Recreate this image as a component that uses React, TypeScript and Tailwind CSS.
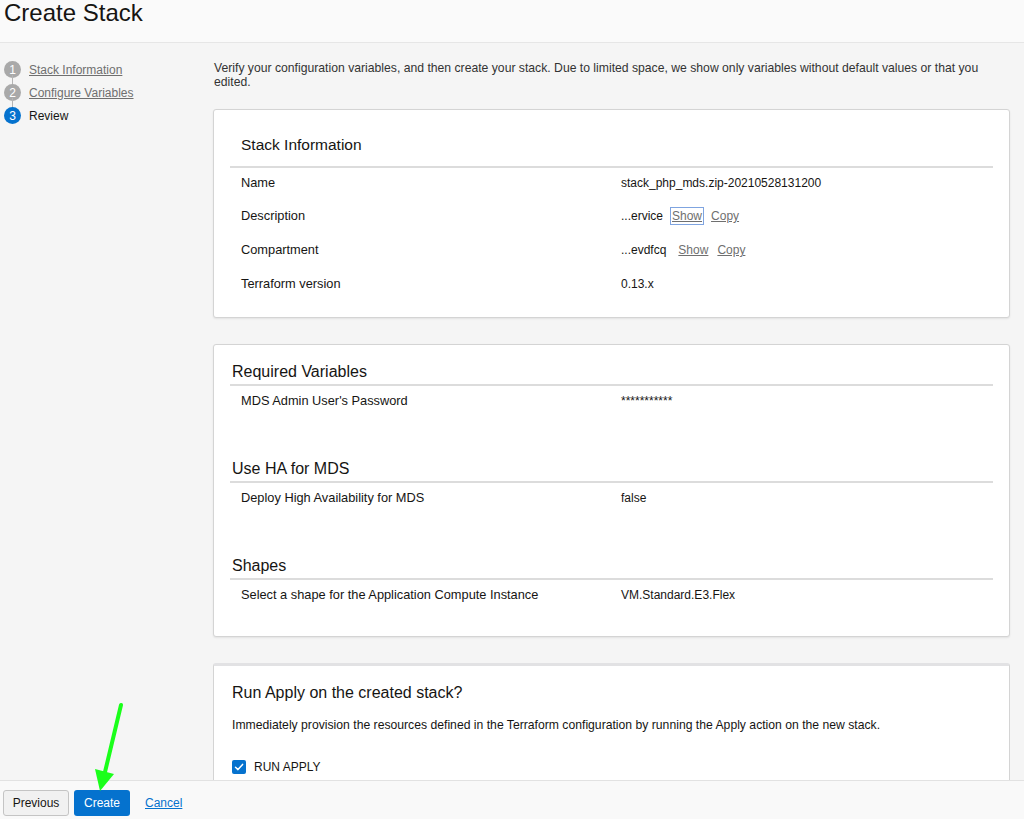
import React from 'react';

type Row = { label: string; value: string; links?: boolean; focused?: boolean };

const stackRows: Row[] = [
  { label: 'Name', value: 'stack_php_mds.zip-20210528131200' },
  { label: 'Description', value: '...ervice', links: true, focused: true },
  { label: 'Compartment', value: '...evdfcq', links: true },
  { label: 'Terraform version', value: '0.13.x' },
];

const sections: { title: string; rows: Row[] }[] = [
  { title: 'Required Variables', rows: [{ label: "MDS Admin User's Password", value: '***********' }] },
  { title: 'Use HA for MDS', rows: [{ label: 'Deploy High Availability for MDS', value: 'false' }] },
  { title: 'Shapes', rows: [{ label: 'Select a shape for the Application Compute Instance', value: 'VM.Standard.E3.Flex' }] },
];

const steps = [
  { n: 1, label: 'Stack Information', done: true },
  { n: 2, label: 'Configure Variables', done: true },
  { n: 3, label: 'Review', done: false },
];

const DataRow: React.FC<{ row: Row }> = ({ row }) => (
  <div className={`flex items-center pl-[11px] text-[12px] leading-[14px] ${row.links ? 'h-[34px]' : 'h-[33px]'}`}>
    <div className="w-[380px] text-[12.8px] text-[#161513]">{row.label}</div>
    <div className="flex items-center text-[#161513]">
      <span>{row.value}</span>
      {row.links && (
        <>
          <span
            className={`underline text-[#6f6f6f] ${
              row.focused ? 'ml-[7px] border border-[#7fa4e0] px-[1px] py-[1px]' : 'ml-[10px] px-[2px] py-[2px]'
            }`}
          >
            Show
          </span>
          <span className="ml-[7px] underline text-[#6f6f6f]">Copy</span>
        </>
      )}
    </div>
  </div>
);

export default function App() {
  return (
    <div className="relative h-[819px] w-[1024px] flex flex-col overflow-hidden bg-[#f5f5f5] font-['Liberation_Sans',Arial,sans-serif] text-[#161513]">
      {/* Header */}
      <div className="h-[43px] shrink-0 bg-[#fafafa] border-b border-[#e6e6e6] px-[4px]">
        <h1 className="text-[24px] leading-[25px] text-[#161513]">Create Stack</h1>
      </div>

      {/* Body */}
      <div className="flex flex-1 min-h-0 overflow-hidden">
        {/* Steps */}
        <div className="w-[213px] shrink-0 pt-[15px] pl-[4px]">
          {steps.map((s, i) => (
            <div key={s.n} className="relative flex items-center h-[23px]">
              {i > 0 && <div className="absolute left-[8px] top-[-6px] h-[12px] w-[1px] bg-[#b5b5b5]" />}
              <div
                className={`relative w-[17px] h-[17px] rounded-full flex items-center justify-center text-[12px] text-white ${
                  s.done ? 'bg-[#a9a9a9]' : 'bg-[#0572ce]'
                }`}
              >
                {s.n}
              </div>
              <span className={`ml-[8px] text-[12px] ${s.done ? 'underline text-[#6f6f6f]' : 'text-[#161513]'}`}>
                {s.label}
              </span>
            </div>
          ))}
        </div>

        {/* Main */}
        <div className="flex-1 pr-[14px] pt-[18px]">
          <p className="pl-[1px] text-[12.2px] leading-[14px] text-[#333] pr-[20px]">
            Verify your configuration variables, and then create your stack. Due to limited space, we show only
            variables without default values or that you edited.
          </p>

          {/* Stack Information */}
          <div className="mt-[20px] bg-white border border-[#d4d4d4] rounded-[3px] shadow-[0_1px_2px_rgba(0,0,0,0.08)] px-[16px] pt-[17px] pb-[17px]">
            <h2 className="pl-[11px] pt-[9px] text-[15.5px] leading-[18px] text-[#161513]">Stack Information</h2>
            <div className="mt-[12px] mb-[-2px] h-[2px] bg-[#dcdcdc]" />
            {stackRows.map((r) => (
              <DataRow key={r.label} row={r} />
            ))}
          </div>

          {/* Variables */}
          <div className="mt-[26px] bg-white border border-[#d4d4d4] rounded-[3px] shadow-[0_1px_2px_rgba(0,0,0,0.08)] px-[16px] pt-[18px] pb-[25px]">
            {sections.map((sec, i) => (
              <div key={sec.title} className={i < sections.length - 1 ? 'pb-[43px]' : ''}>
                <h2 className="pl-[2px] text-[16px] leading-[18px] text-[#161513]">{sec.title}</h2>
                <div className="mt-[3px] mb-[-2px] h-[2px] bg-[#dcdcdc]" />
                {sec.rows.map((r) => (
                  <DataRow key={r.label} row={r} />
                ))}
              </div>
            ))}
          </div>

          {/* Run apply */}
          <div className="mt-[26px] bg-white border border-[#d4d4d4] border-t-[3px] border-t-[#e2e2e4] rounded-[3px] px-[18px] pt-[18px] pb-[20px]">
            <h2 className="text-[16px] leading-[18px] text-[#161513]">Run Apply on the created stack?</h2>
            <p className="mt-[16px] text-[12.2px] leading-[14px] text-[#161513]">
              Immediately provision the resources defined in the Terraform configuration by running the Apply action on
              the new stack.
            </p>
            <div className="mt-[26px] flex items-center">
              <div className="w-[14px] h-[14px] rounded-[2px] bg-[#0572ce] flex items-center justify-center">
                <svg viewBox="0 0 14 14" className="w-[14px] h-[14px]">
                  <path d="M3.5 7.2 L6 9.6 L10.6 4.4" fill="none" stroke="white" strokeWidth="1.5" strokeLinecap="round" strokeLinejoin="round" />
                </svg>
              </div>
              <span className="ml-[8px] text-[12px] text-[#161513]">RUN APPLY</span>
            </div>
          </div>
        </div>
      </div>

      {/* Footer */}
      <div className="h-[39px] shrink-0 bg-[#f9f9f9] border-t border-[#e2e2e2] flex items-center pl-[3px] pt-[6px]">
        <button className="h-[26px] w-[66px] rounded-[3px] border border-[#c4c4c4] bg-[#f1f1f1] text-[12px] text-[#161513]">
          Previous
        </button>
        <button className="ml-[5px] h-[26px] w-[56px] rounded-[3px] bg-[#0572ce] text-[12px] text-white">Create</button>
        <span className="ml-[15px] text-[12px] text-[#0572ce] underline">Cancel</span>
      </div>

      {/* Green annotation arrow */}
      <svg className="absolute left-0 top-0 pointer-events-none" width="1024" height="819" viewBox="0 0 1024 819">
        <line x1="121" y1="705" x2="105" y2="772" stroke="#1aff1a" strokeWidth="4" strokeLinecap="round" />
        <polygon points="95,769 114,774 100,791" fill="#1aff1a" />
      </svg>
    </div>
  );
}
